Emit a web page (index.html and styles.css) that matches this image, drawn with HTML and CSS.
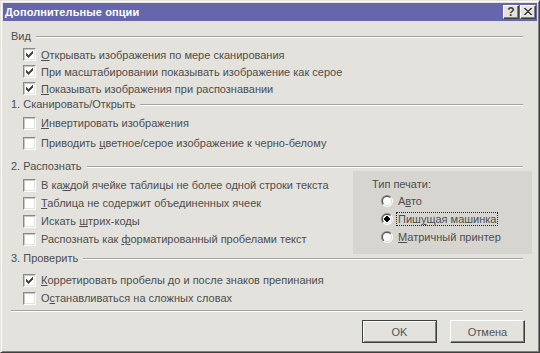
FILE: index.html
```html
<!DOCTYPE html>
<html lang="ru">
<head>
<meta charset="utf-8">
<title>Дополнительные опции</title>
<link rel="stylesheet" href="styles.css">
</head>
<body>
<div class="window">
  <div class="titlebar">
    <span class="title">Дополнительные опции</span>
    <div class="caption-btns">
      <span class="cap-btn help">?</span>
      <span class="cap-btn close"><svg width="8" height="7" viewBox="0 0 8 7"><path d="M0 0h2v1h-2z M6 0h2v1h-2z M1 1h2v1h-2z M5 1h2v1h-2z M2 2h4v1h-4z M3 3h2v1h-2z M2 4h4v1h-4z M1 5h2v1h-2z M5 5h2v1h-2z M0 6h2v1h-2z M6 6h2v1h-2z" fill="#404040"/></svg></span>
    </div>
  </div>

  <div class="content">
    <div class="group-head"><span>Вид</span><i class="rule"></i></div>
    <div class="rows rows-a">
      <label class="check"><span class="box"><svg class="tick" width="9" height="9" viewBox="-1 -1 9 9"><path d="M0 2h1v3h-1z M1 3h1v3h-1z M2 4h1v3h-1z M3 3h1v3h-1z M4 2h1v3h-1z M5 1h1v3h-1z M6 0h1v3h-1z"/></svg></span><span><u>О</u>ткрывать изображения по мере сканирования</span></label>
      <label class="check"><span class="box"><svg class="tick" width="9" height="9" viewBox="-1 -1 9 9"><path d="M0 2h1v3h-1z M1 3h1v3h-1z M2 4h1v3h-1z M3 3h1v3h-1z M4 2h1v3h-1z M5 1h1v3h-1z M6 0h1v3h-1z"/></svg></span><span>При масштабировании показывать изображение как серое</span></label>
      <label class="check"><span class="box"><svg class="tick" width="9" height="9" viewBox="-1 -1 9 9"><path d="M0 2h1v3h-1z M1 3h1v3h-1z M2 4h1v3h-1z M3 3h1v3h-1z M4 2h1v3h-1z M5 1h1v3h-1z M6 0h1v3h-1z"/></svg></span><span><u>П</u>оказывать изображения при распознавании</span></label>
    </div>

    <div class="group-head"><span>1. Сканировать/Открыть</span><i class="rule"></i></div>
    <div class="rows rows-b">
      <label class="check"><span class="box"></span><span><u>И</u>нвертировать изображения</span></label>
      <label class="check"><span class="box"></span><span>Приводить <u>ц</u>ветное/серое изображение к черно-белому</span></label>
    </div>

    <div class="group-head head-c"><span>2. Распознать</span><i class="rule"></i></div>
    <div class="split">
      <div class="rows rows-c">
        <label class="check"><span class="box"></span><span>В ка<u>ж</u>дой ячейке таблицы не более одной строки текста</span></label>
        <label class="check"><span class="box"></span><span><u>Т</u>аблица не содержит объединенных ячеек</span></label>
        <label class="check"><span class="box"></span><span>Искать <u>ш</u>трих-коды</span></label>
        <label class="check"><span class="box"></span><span>Распознать как <u>ф</u>орматированный пробелами текст</span></label>
      </div>
      <div class="panel">
        <div class="panel-title">Тип печати:</div>
        <label class="radio"><svg class="rad" width="12" height="12" viewBox="0 0 12 12"><use href="#radio"/></svg><span>А<u>в</u>то</span></label>
        <label class="radio"><svg class="rad" width="12" height="12" viewBox="0 0 12 12"><use href="#radio"/><rect x="4" y="4" width="4" height="4" fill="#000"/><rect x="5" y="3" width="2" height="6" fill="#000"/><rect x="3" y="5" width="6" height="2" fill="#000"/></svg><span class="focus">Пиш<u>у</u>щая машинка</span></label>
        <label class="radio"><svg class="rad" width="12" height="12" viewBox="0 0 12 12"><use href="#radio"/></svg><span><u>М</u>атричный принтер</span></label>
      </div>
    </div>

    <div class="group-head head-d"><span>3. Проверить</span><i class="rule"></i></div>
    <div class="rows rows-d">
      <label class="check"><span class="box"><svg class="tick" width="9" height="9" viewBox="-1 -1 9 9"><path d="M0 2h1v3h-1z M1 3h1v3h-1z M2 4h1v3h-1z M3 3h1v3h-1z M4 2h1v3h-1z M5 1h1v3h-1z M6 0h1v3h-1z"/></svg></span><span><u>К</u>орретировать пробелы до и после знаков препинания</span></label>
      <label class="check"><span class="box"></span><span>О<u>с</u>танавливаться на сложных словах</span></label>
    </div>
  </div>

  <div class="footer">
    <i class="rule sep"></i>
    <div class="buttons">
      <span class="btn default">OK</span>
      <span class="btn">Отмена</span>
    </div>
  </div>
</div>

<svg width="0" height="0" class="defs">
  <defs>
    <linearGradient id="gOuter" x1="0" y1="0" x2="1" y2="1">
      <stop offset="0.5" stop-color="#8a8a8a"/>
      <stop offset="0.5" stop-color="#ffffff"/>
    </linearGradient>
    <linearGradient id="gInner" x1="0" y1="0" x2="1" y2="1">
      <stop offset="0.5" stop-color="#505050"/>
      <stop offset="0.5" stop-color="#d6d5cf"/>
    </linearGradient>
    <g id="radio">
      <circle cx="6" cy="6" r="6" fill="url(#gOuter)"/>
      <circle cx="6" cy="6" r="5" fill="url(#gInner)"/>
      <circle cx="6" cy="6" r="4" fill="#ffffff"/>
    </g>
  </defs>
</svg>
</body>
</html>
```

FILE: styles.css
```css
* { box-sizing: border-box; }

body {
  margin: 0;
  background: #ffffff;
  font-family: "Liberation Sans", Arial, sans-serif;
  font-size: 11px;
  color: #4e4e4e;
}

.defs { position: absolute; }

u { text-decoration: underline; text-underline-offset: 1px; }

.window {
  width: 540px;
  height: 353px;
  background: #e3e2dc;
  border: 1px solid;
  border-color: #e3e2dc #404040 #404040 #e3e2dc;
  box-shadow: inset 1px 1px #ffffff, inset -1px -1px #808080;
  padding: 2px;
  display: flex;
  flex-direction: column;
}

/* title bar */
.titlebar {
  height: 18px;
  background: #6566ab;
  display: flex;
  align-items: center;
  padding: 0 1px 0 2px;
}
.title {
  color: #ffffff;
  font-weight: bold;
  font-size: 11px;
  letter-spacing: 0.1px;
  flex: 1;
}
.caption-btns { display: flex; gap: 1px; }
.cap-btn {
  width: 16px;
  height: 14px;
  background: #e3e2dc;
  border: 1px solid;
  border-color: #ffffff #404040 #404040 #ffffff;
  box-shadow: inset -1px -1px #808080;
  display: flex;
  align-items: center;
  justify-content: center;
}
.help {
  font-weight: bold;
  font-size: 12px;
  color: #404040;
  line-height: 12px;
  padding-bottom: 1px;
}
.close svg { display: block; margin-top: -1px; }

/* content */
.content {
  padding: 8px 14px 0 8px;
  display: flex;
  flex-direction: column;
}

.group-head {
  height: 14px;
  line-height: 14px;
  display: flex;
  align-items: center;
}
.rule {
  display: block;
  flex: 1;
  height: 2px;
  border-top: 1px solid #a3a29d;
  border-bottom: 1px solid #ffffff;
  margin: 2px 0 0 5px;
}

.rows { display: flex; flex-direction: column; padding-left: 12px; }
.rows-a { margin-top: 3px; }
.rows-a .check { height: 17px; }
.rows-b { margin-top: 2px; }
.rows-b .check { height: 20px; }
.head-c { margin-top: 6px; }
.rows-c { padding-top: 5px; }
.rows-c .check { height: 18px; }
.head-d { margin-top: -3px; }
.rows-d { margin-top: 6px; }
.rows-d .check { height: 18px; }

.check {
  display: flex;
  align-items: center;
  white-space: nowrap;
}
.box {
  width: 13px;
  height: 13px;
  flex: none;
  margin-right: 5px;
  background: #ffffff;
  border: 1px solid;
  border-color: #8a8a8a #ffffff #ffffff #8a8a8a;
  box-shadow: inset 1px 1px #c8c7c2, inset -1px -1px #e3e2dc;
  padding: 1px;
}
.tick { display: block; fill: #4a4a4a; }

/* split section */
.split {
  margin-top: -2px;
  height: 83px;
  display: flex;
  justify-content: space-between;
}
.panel {
  width: 179px;
  margin-right: -9px;
  background: #d6d5cf;
  padding: 6px 0 0 19px;
}
.panel-title { height: 14px; line-height: 14px; margin-bottom: 1px; }
.radio {
  height: 18px;
  display: flex;
  align-items: center;
  padding-left: 9px;
  white-space: nowrap;
}
.rad { display: block; flex: none; margin-right: 5px; }
.focus { outline: 1px dotted #222; outline-offset: 0; padding: 0 1px; margin-left: -1px; }

/* footer */
.footer { display: flex; flex-direction: column; }
.sep {
  flex: none;
  margin: 3px 14px 0 8px;
}
.buttons {
  margin-top: 8px;
  display: flex;
  justify-content: flex-end;
  gap: 13px;
  padding-right: 12px;
}
.btn {
  width: 75px;
  height: 23px;
  display: flex;
  align-items: center;
  justify-content: center;
  color: #555555;
  border: 1px solid;
  border-color: #ffffff #404040 #404040 #ffffff;
  box-shadow: inset -1px -1px #808080;
}
.btn.default {
  border-color: #404040;
  box-shadow: inset 1px 1px #ffffff, inset -1px -1px #808080;
}
```
